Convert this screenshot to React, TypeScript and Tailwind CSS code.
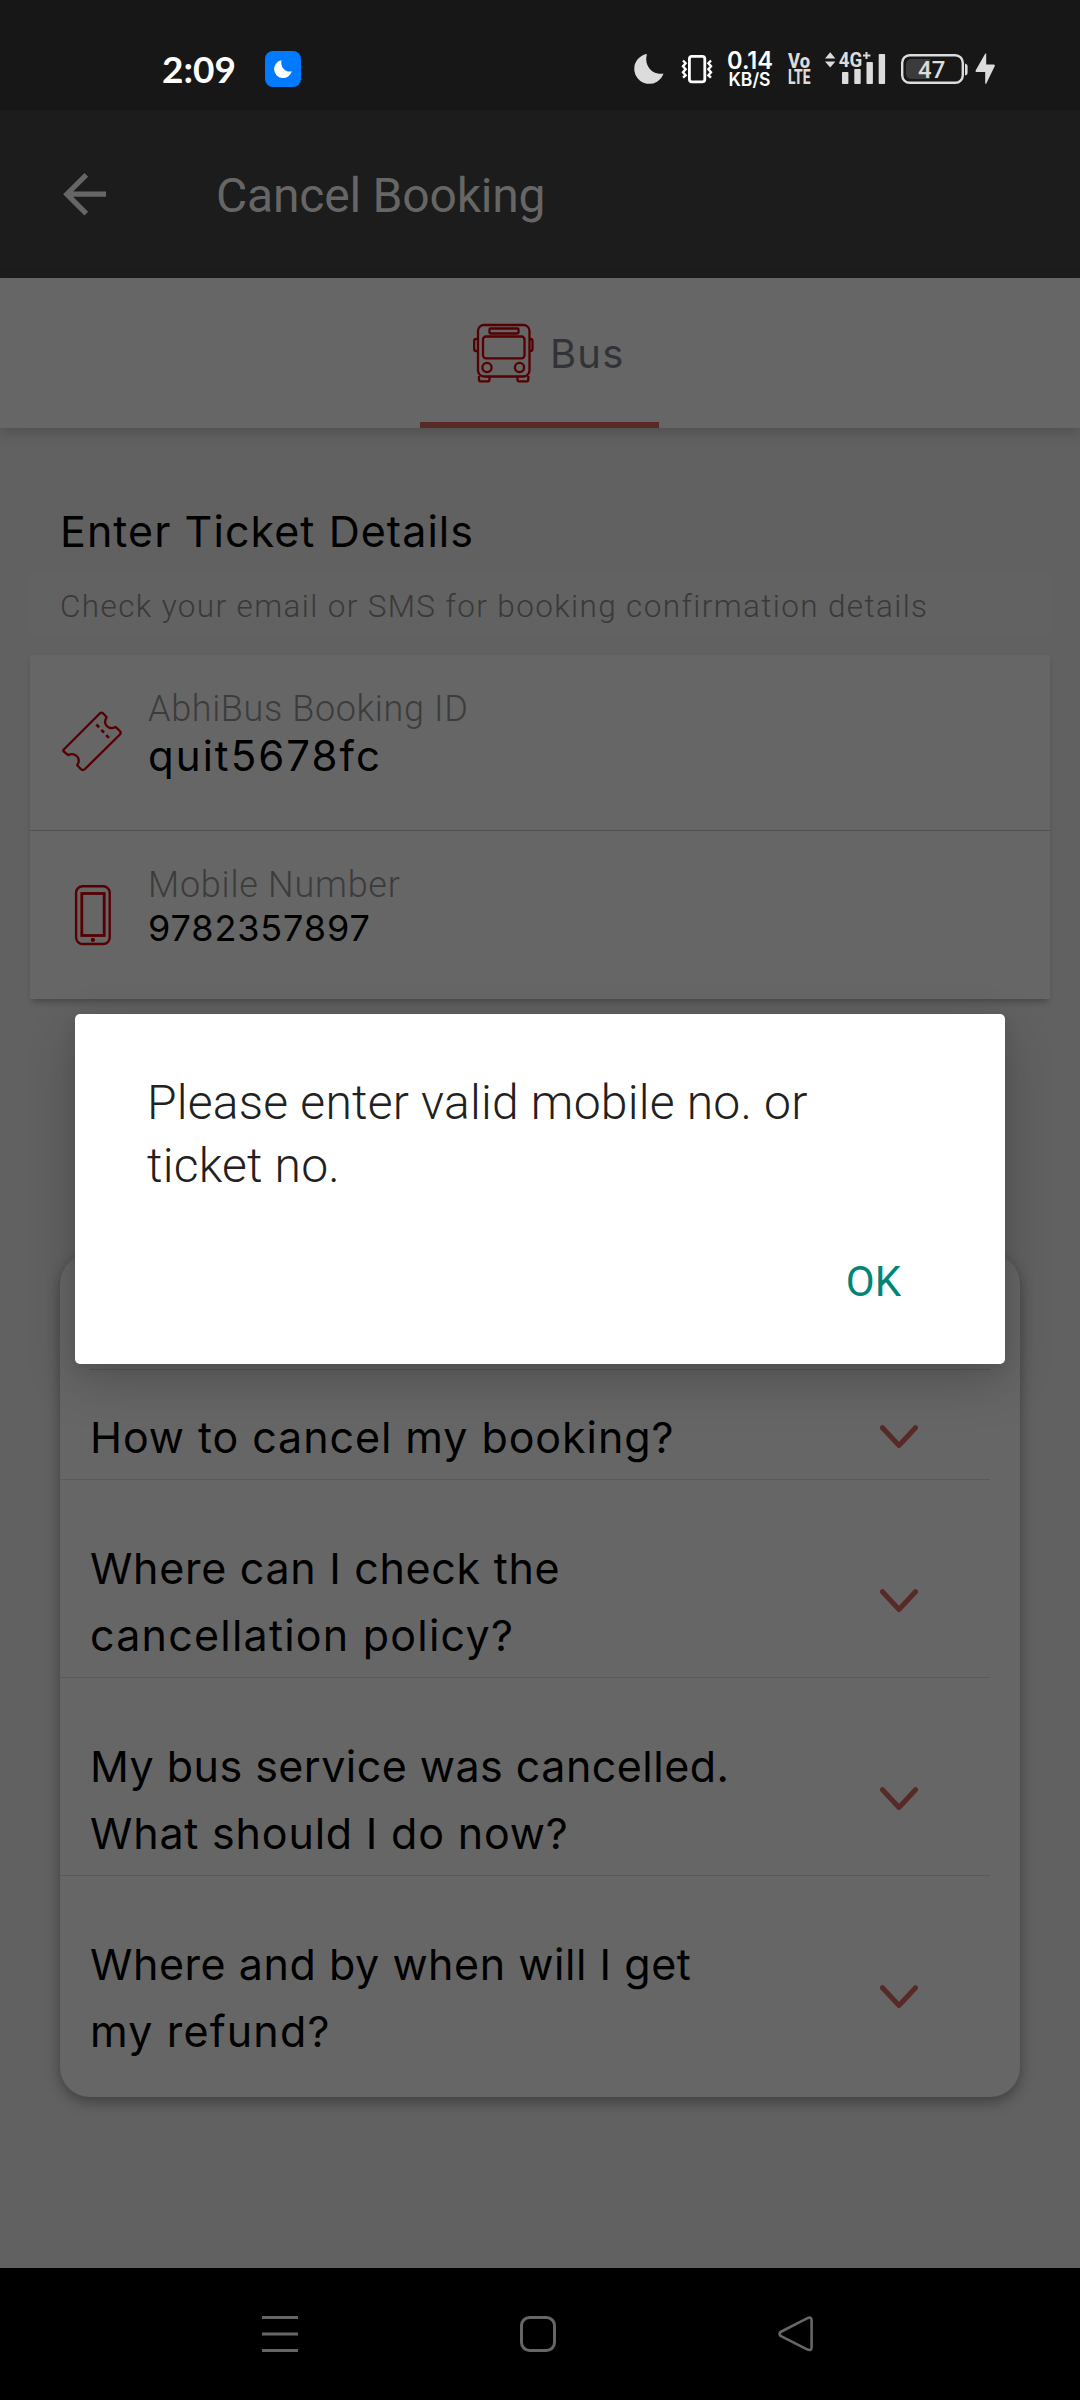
import React from 'react';

const RED = '#560003';

function StatusBar() {
  return (
    <div className="flex h-[110px] items-start bg-[#171717] pt-[46px] text-white">
      <div className="ml-[162px] w-[103px] font-['Lato',sans-serif] text-[37px] leading-[46px] font-bold whitespace-nowrap">
        2:09
      </div>
      <div className="mt-[5px] flex h-9 w-9 items-center justify-center rounded-lg bg-[#007aff]">
        <svg width="18" height="18" viewBox="0 0 18 18">
          <path d="M7.5 0.2A9 9 0 1 0 17.8 11.3C12 13 6 7.5 7.5 0.2Z" fill="#fff" />
        </svg>
      </div>
      <svg className="ml-[333px]" width="30" height="46" viewBox="634 46 30 46">
        <path d="M647 54A15 15 0 1 0 663.5 73.5C653 75.5 643.5 66 647 54Z" fill="#dcdcdc" />
      </svg>
      <svg className="ml-4" width="34" height="46" viewBox="681 46 34 46" fill="none" stroke="#fff">
        <rect x="690.4" y="56.4" width="15.4" height="25.4" rx="2.6" strokeWidth="2.8" />
        <path d="M684 60.5l2.6 2.8-2.6 3 2.6 3-2.6 3 2.6 3-2.6 2.4M712 60.5l-2.6 2.8 2.6 3-2.6 3 2.6 3-2.6 3 2.6 2.4" strokeWidth="2.4" />
      </svg>
      <svg className="ml-3" width="48" height="46" viewBox="726 46 48 46" fill="#fff">
        <text x="727" y="69" fontFamily="Inter, sans-serif" fontWeight="600" fontSize="24" textLength="46" lengthAdjust="spacingAndGlyphs">0.14</text>
        <text x="728.5" y="86" fontFamily="Inter, sans-serif" fontWeight="600" fontSize="18" textLength="42" lengthAdjust="spacingAndGlyphs">KB/S</text>
      </svg>
      <svg className="ml-[13px]" width="25" height="46" viewBox="787 46 25 46" fill="#dcdcdc">
        <text x="788" y="67.5" fontFamily="Roboto, sans-serif" fontWeight="800" fontSize="20" textLength="22" lengthAdjust="spacingAndGlyphs">Vo</text>
        <text x="788" y="84" fontFamily="Roboto, sans-serif" fontWeight="800" fontSize="20" textLength="22.5" lengthAdjust="spacingAndGlyphs">LTE</text>
      </svg>
      <svg className="ml-3" width="64" height="46" viewBox="824 46 64 46" fill="#dcdcdc">
        <path d="M825 58.6l5.2-6.4 5.2 6.4zM825 61.4l5.2 6.2 5.2-6.2z" />
        <text x="838.8" y="67" fontFamily="Roboto, sans-serif" fontWeight="700" fontSize="20" textLength="23.5" lengthAdjust="spacingAndGlyphs">4G</text>
        <path d="M866.5 52v7M863 55.5h7.4" stroke="#dcdcdc" strokeWidth="2" />
        <rect x="842" y="72" width="6.4" height="12" rx="0.8" />
        <rect x="854.3" y="69" width="6.4" height="15" rx="0.8" />
        <rect x="866.5" y="62" width="6.4" height="22" rx="0.8" />
        <rect x="878.7" y="54" width="6.4" height="30" rx="0.8" />
      </svg>
      <svg className="ml-3" width="70" height="46" viewBox="900 46 70 46">
        <rect x="902.2" y="55.2" width="60.6" height="27.6" rx="7.5" fill="none" stroke="#dcdcdc" strokeWidth="2.4" />
        <path d="M911 59h19v20h-19a5 5 0 0 1-5-5v-10a5 5 0 0 1 5-5z" fill="#3b3b3b" />
        <path d="M965 63.5q2.6 0.5 2.6 2.5v7q0 2-2.6 2.5z" fill="#dcdcdc" />
        <text x="918" y="78.2" fontFamily="Roboto, sans-serif" fontWeight="500" fontSize="24" textLength="27.5" fill="#dcdcdc">47</text>
      </svg>
      <svg className="ml-[5px]" width="21" height="46" viewBox="975 46 21 46">
        <path d="M985.3 53.6L975.6 70.4q-.4 1.6 1 1.6h8.6v11.8h1L994.8 66q.3-1.6-1-1.6h-7.6V53.6z" fill="#dcdcdc" />
      </svg>
    </div>
  );
}

function Header() {
  return (
    <div className="flex h-[168px] items-center bg-[#1c1c1c]">
      <svg className="ml-[62px]" width="46" height="46" viewBox="62 171 46 46" fill="none" stroke="#666" strokeWidth="5.2">
        <path d="M106 194.2H67M86.3 174.8L66.8 194.2 86.3 213.6" />
      </svg>
      <h1 className="mt-[3px] ml-[108px] font-['Roboto',sans-serif] text-[48px] leading-[60px] tracking-[-0.2px] text-[#666]">
        Cancel Booking
      </h1>
    </div>
  );
}

function BusTab() {
  return (
    <div className="relative z-10 flex h-[150px] flex-col items-center bg-[#666] shadow-[0_4px_14px_rgba(0,0,0,0.2)]">
      <div className="flex h-36 w-60 items-center">
        <svg className="mt-1.5 ml-[51px]" width="64" height="64" viewBox="471 321 64 64" fill="none" stroke={RED} strokeWidth="2.3">
          <rect x="478" y="325" width="51.5" height="51.5" rx="6" />
          <rect x="489.5" y="328.5" width="29" height="5" rx="1" />
          <rect x="483" y="336.5" width="41.5" height="21.8" rx="3" />
          <circle cx="487" cy="367.5" r="4.6" />
          <circle cx="519.5" cy="367.5" r="4.6" />
          <path d="M478 339h-2q-1.8 0-1.8 2v8q0 2 1.8 2h2M529.5 339h1.2q1.8 0 1.8 2v8q0 2-1.8 2h-1.2" />
          <path d="M479 376v3.4q0 2 2 2h6.5q2 0 2-2v-3M528.3 376v3.4q0 2-2 2h-6.8q-2 0-2-2v-3" />
        </svg>
        <span className="mt-2 ml-[15px] font-['Inter',sans-serif] text-[40px] leading-[50px] tracking-[1.2px] text-[#323338]">Bus</span>
      </div>
      <div className="mr-px h-1.5 w-[239px] bg-[#582a27]" />
    </div>
  );
}

function TicketIcon() {
  return (
    <svg width="64" height="64" viewBox="60 710 64 64" fill="none" stroke={RED} strokeWidth="2.3" strokeLinejoin="round">
      <path d="M63.8 749.5L99.5 713.8q2-2 4 0l3.2 3.4q-3.2 5-.2 8.6q3.8 4 9.2 1.2l4 3.8q2 2 0 4L85 769q-2.2 2.2-4.2 0l-3.6-3.8q3.2-5.2-.2-8.9q-4-3.6-8.8-1.2l-4.4-3.6q-1.2-1 0-2z" />
      <path d="M96.4 724.5l13.5 14.5" strokeWidth="2.6" strokeDasharray="4 3.2" />
    </svg>
  );
}

function PhoneIcon() {
  return (
    <svg width="64" height="64" viewBox="61 883 64 64" fill="none" stroke={RED}>
      <rect x="76.1" y="886.3" width="33.6" height="57.7" rx="6.5" strokeWidth="2.4" />
      <rect x="81.8" y="893.5" width="22.4" height="42" strokeWidth="2.8" />
      <circle cx="92.9" cy="939.9" r="2.1" fill={RED} stroke="none" />
    </svg>
  );
}

function BookingForm() {
  return (
    <section className="px-[30px] pt-[73px]">
      <h2 className="ml-[30px] h-[72px] font-['Inter',sans-serif] text-[43px] leading-[60px] tracking-[1.06px] text-black">
        Enter Ticket Details
      </h2>
      <p className="h-16 bg-[#626262] pl-[30px] font-['Roboto',sans-serif] text-[31.5px] leading-[67px] font-light tracking-[1.37px] whitespace-nowrap text-[#393939]">
        Check your email or SMS for booking confirmation details
      </p>
      <div className="mt-[18px] bg-[#666] shadow-[0_5px_6px_-2px_rgba(0,0,0,0.26)]">
        <div className="flex h-44 border-b border-[#525252]">
          <div className="ml-[30px] pt-[55px]"><TicketIcon /></div>
          <div className="ml-6 pt-8">
            <div className="font-['Roboto',sans-serif] text-[36px] leading-[44px] font-[350] tracking-[0.63px] text-[#3c3c3c]">AbhiBus Booking ID</div>
            <div className="font-['Inter',sans-serif] text-[42px] leading-[50px] tracking-[2.05px] text-black">quit5678fc</div>
          </div>
        </div>
        <div className="flex h-[168px]">
          <div className="ml-[31px] pt-[52px]"><PhoneIcon /></div>
          <div className="ml-[23px] pt-8">
            <div className="font-['Roboto',sans-serif] text-[36px] leading-[44px] font-[350] tracking-[0.75px] text-[#3c3c3c]">Mobile Number</div>
            <div className="font-['Inter',sans-serif] text-[36px] leading-[42px] tracking-[0.88px] text-black">9782357897</div>
          </div>
        </div>
      </div>
    </section>
  );
}

function Chevron() {
  return (
    <svg className="mb-0.5" width="40" height="26" viewBox="0 0 40 26" fill="none" stroke="#582a27" strokeWidth="5" strokeLinecap="round" strokeLinejoin="round">
      <path d="M3.5 3.7L20 21.500 36.5 3.7" />
    </svg>
  );
}

const FAQS = [
  { row: 'pt-[34px] pb-2 border-b', lines: [{ text: 'How to cancel my booking?', track: 'tracking-[0.92px]' }] },
  {
    row: 'pt-[55px] pb-2 border-b',
    lines: [
      { text: 'Where can I check the', track: 'tracking-[0.7px]' },
      { text: 'cancellation policy?', track: 'tracking-[1.22px]' },
    ],
  },
  {
    row: 'pt-[55px] pb-2 border-b',
    lines: [
      { text: 'My bus service was cancelled.', track: 'tracking-[0.47px]' },
      { text: 'What should I do now?', track: 'tracking-[0.8px]' },
    ],
  },
  {
    row: 'pt-[55px]',
    lines: [
      { text: 'Where and by when will I get', track: 'tracking-[0.55px]' },
      { text: 'my refund?', track: 'tracking-[1.17px]' },
    ],
  },
];

function Faq() {
  return (
    <section className="mx-[60px] mt-[255px] h-[843px] rounded-[30px] bg-[#666] shadow-[0_5px_14px_rgba(0,0,0,0.35)]">
      <div className="mx-[30px] h-[116px] border-b border-[#585858]" />
      {FAQS.map((f) => (
        <div key={f.lines[0].text} className={`mr-[30px] flex justify-between border-[#5a5a5a] pr-[71px] pl-[30px] ${f.row}`}>
          <div className="font-['Inter',sans-serif] text-[43px] leading-[67px] whitespace-nowrap text-black">
            {f.lines.map((l) => (
              <div key={l.text} className={l.track}>{l.text}</div>
            ))}
          </div>
          <div className="flex items-center"><Chevron /></div>
        </div>
      ))}
    </section>
  );
}

function Dialog() {
  return (
    <div role="dialog" className="absolute top-[1014px] left-[75px] z-20 flex h-[350px] w-[930px] flex-col rounded-[5px] bg-white pt-[57px] shadow-[0_18px_50px_rgba(0,0,0,0.2),0_4px_16px_rgba(0,0,0,0.08)]">
      <p className="ml-[72px] font-['Roboto',sans-serif] text-[48px] leading-[63px] font-light tracking-[0.23px] text-[#212121]">
        Please enter valid mobile no. or
        <br />
        ticket no.
      </p>
      <button className="mt-[60px] mr-[104px] self-end font-['Roboto',sans-serif] text-[42px] leading-[50px] text-[#008577]">OK</button>
    </div>
  );
}

function NavBar() {
  return (
    <div className="flex h-[132px] items-center bg-black">
      <svg className="ml-[260px]" width="40" height="40" viewBox="260 2314 40 40" stroke="#666" strokeWidth="3">
        <path d="M262 2317.6h36M262 2334h36M262 2350.4h36" />
      </svg>
      <svg className="ml-[218px]" width="40" height="40" viewBox="518 2314 40 40" fill="none" stroke="#666" strokeWidth="3">
        <rect x="521.5" y="2317.5" width="33" height="33" rx="8" />
      </svg>
      <svg className="ml-[218px]" width="40" height="40" viewBox="776 2314 40 40" fill="none" stroke="#666" strokeWidth="2.6" strokeLinejoin="round">
        <path d="M780.5 2332q-1.8 1.8 0 3.8L807 2349.3q4.6 2 4.6-1.8V2320q0-3.8-4.6-1.6z" />
      </svg>
    </div>
  );
}

export default function App() {
  return (
    <div className="relative flex h-[2400px] w-[1080px] flex-col overflow-hidden bg-[#616161]">
      <StatusBar />
      <Header />
      <BusTab />
      <main className="flex-1">
        <BookingForm />
        <Faq />
      </main>
      <NavBar />
      <Dialog />
    </div>
  );
}
